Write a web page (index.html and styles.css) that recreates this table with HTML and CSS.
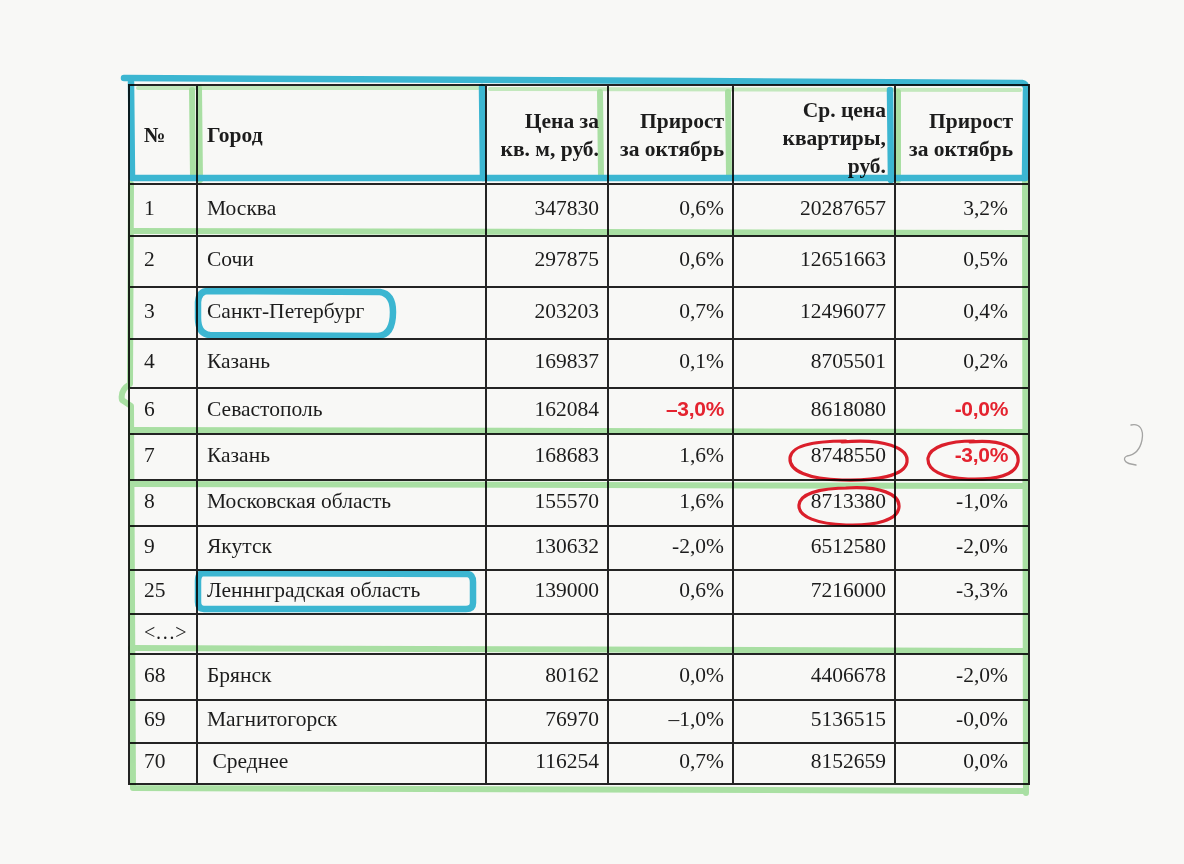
FILE: index.html
```html
<!DOCTYPE html>
<html lang="ru">
<head>
<meta charset="utf-8">
<title>Цены на жильё</title>
<link rel="stylesheet" href="styles.css">
</head>
<body>
<main class="sheet">
  <table class="price-table">
    <colgroup>
      <col class="c-num"><col class="c-city"><col class="c-price"><col class="c-grow"><col class="c-flat"><col class="c-grow2">
    </colgroup>
    <thead>
      <tr class="head">
        <th class="t-left num">№</th>
        <th class="t-left city">Город</th>
        <th class="t-right">Цена за<br>кв. м, руб.</th>
        <th class="t-right">Прирост<br>за октябрь</th>
        <th class="t-right flat-h">Ср. цена<br>квартиры,<br>руб.</th>
        <th class="t-right last">Прирост<br>за октябрь</th>
      </tr>
    </thead>
    <tbody>
      <tr class="h52"><td class="num">1</td><td class="city">Москва</td><td>347830</td><td>0,6%</td><td>20287657</td><td class="last">3,2%</td></tr>
      <tr class="h51"><td class="num">2</td><td class="city">Сочи</td><td>297875</td><td>0,6%</td><td>12651663</td><td class="last">0,5%</td></tr>
      <tr class="h52"><td class="num">3</td><td class="city">Санкт-Петербург</td><td>203203</td><td>0,7%</td><td>12496077</td><td class="last">0,4%</td></tr>
      <tr class="h49"><td class="num">4</td><td class="city">Казань</td><td>169837</td><td>0,1%</td><td>8705501</td><td class="last">0,2%</td></tr>
      <tr class="h46"><td class="num">6</td><td class="city">Севастополь</td><td>162084</td><td><span class="red">–3,0%</span></td><td>8618080</td><td class="last"><span class="red">-0,0%</span></td></tr>
      <tr class="h46"><td class="num">7</td><td class="city">Казань</td><td>168683</td><td>1,6%</td><td>8748550</td><td class="last"><span class="red">-3,0%</span></td></tr>
      <tr class="h46"><td class="num">8</td><td class="city">Московская область</td><td>155570</td><td>1,6%</td><td>8713380</td><td class="last">-1,0%</td></tr>
      <tr class="h44"><td class="num">9</td><td class="city">Якутск</td><td>130632</td><td>-2,0%</td><td>6512580</td><td class="last">-2,0%</td></tr>
      <tr class="h44"><td class="num">25</td><td class="city">Ленннградская область</td><td>139000</td><td>0,6%</td><td>7216000</td><td class="last">-3,3%</td></tr>
      <tr class="h40"><td class="num gap">&lt;…&gt;</td><td class="city"></td><td></td><td></td><td></td><td class="last"></td></tr>
      <tr class="h46"><td class="num">68</td><td class="city">Брянск</td><td>80162</td><td>0,0%</td><td>4406678</td><td class="last">-2,0%</td></tr>
      <tr class="h43"><td class="num">69</td><td class="city">Магнитогорск</td><td>76970</td><td>–1,0%</td><td>5136515</td><td class="last">-0,0%</td></tr>
      <tr class="h41"><td class="num">70</td><td class="city">&nbsp;Среднее</td><td>116254</td><td>0,7%</td><td>8152659</td><td class="last">0,0%</td></tr>
    </tbody>
  </table>

  <svg class="marks" width="1184" height="864" viewBox="0 0 1184 864" aria-hidden="true">
    <g class="green-faint" fill="none" stroke-linecap="round">
      <path d="M138 88 L478 88"/>
      <path d="M490 89 L1020 90"/>
    </g>
    <g class="green" fill="none" stroke-linecap="round" stroke-linejoin="round">
      <path d="M192 90 L193 177"/>
      <path d="M199 88 L200 180"/>
      <path d="M600 92 L601 176"/>
      <path d="M728 92 L729 176"/>
      <path d="M898 92 L898 180"/>
      <path d="M131 184 L130 384 Q120 390 122 400 L131 406 L133 788 L1026 791"/>
      <path d="M1025 180 L1026 793"/>
      <path d="M131 231 L1025 233"/>
      <path d="M131 430 L1025 432"/>
      <path d="M131 484 L1025 486"/>
      <path d="M131 648 L1025 651"/>
    </g>
    <g class="blue" fill="none" stroke-linecap="round" stroke-linejoin="round">
      <path d="M124 78 L700 81 L1022 83 Q1027 84 1026 90 L1025 178"/>
      <path d="M131 82 L132 178 L1025 178"/>
      <path d="M482 87 L483 178"/>
      <path d="M890 90 L891 180"/>
      <path d="M208 291 L380 292 Q393 294 393 312 Q393 335 378 336 L210 335 Q198 334 198 318 L198 302 Q199 291 208 291 Z"/>
      <path d="M204 573 L468 574 Q473 575 473 582 L473 603 Q473 609 466 609 L204 609 Q198 609 198 602 L198 581 Q198 573 204 573 Z"/>
    </g>
    <g class="red-ink" fill="none" stroke-linecap="round">
      <path d="M842 442 C 884 438 909 448 907 462 C 905 476 876 481 842 480 C 808 479 789 471 790 458 C 791 446 812 441 846 441"/>
      <path d="M970 442 C 1002 439 1020 448 1018 462 C 1016 475 996 480 968 479 C 942 478 927 470 928 458 C 930 447 948 441 974 441"/>
      <path d="M846 488 C 880 486 900 494 899 507 C 898 520 876 526 846 525 C 818 524 798 517 799 505 C 800 494 818 488 850 488"/>
    </g>
    <path class="squiggle" d="M1131 425 C 1140 423 1144 430 1142 440 C 1140 450 1134 455 1127 456 C 1122 458 1125 463 1131 464 L1136 465"/>
  </svg>
</main>
</body>
</html>
```

FILE: styles.css
```css
html, body {
  margin: 0;
  padding: 0;
  background: #f8f8f6;
}

.sheet {
  position: relative;
  width: 1184px;
  height: 864px;
  box-sizing: border-box;
  padding: 84px 0 0 128px;
  font-family: "Liberation Serif", "Times New Roman", serif;
  color: #1c1c1c;
  overflow: hidden;
}

.price-table {
  border-collapse: collapse;
  table-layout: fixed;
  width: 900px;
  font-size: 21.5px;
}

.c-num { width: 68px; }
.c-city { width: 289px; }
.c-price { width: 122px; }
.c-grow { width: 125px; }
.c-flat { width: 162px; }
.c-grow2 { width: 134px; }

.price-table th,
.price-table td {
  border: 2px solid #242424;
  padding: 0 8px 0 8px;
  text-align: right;
  vertical-align: middle;
  white-space: nowrap;
  line-height: 26px;
}

.price-table td { padding-bottom: 5px; }

.price-table th {
  font-weight: bold;
  line-height: 28px;
  font-size: 21.5px;
}

.head { height: 99px; }
.head .flat-h { padding-top: 6px; }

.price-table .t-left { text-align: left; }
.price-table .num { text-align: left; padding-left: 14px; }
.price-table .city { text-align: left; padding-left: 9px; }
.price-table td.last { padding-right: 20px; }
.price-table th.last { padding-right: 15px; }
.price-table .gap { font-size: 20px; }

.h52 { height: 52px; }
.h51 { height: 51px; }
.h49 { height: 49px; }
.h46 { height: 46px; }
.h44 { height: 44px; }
.h43 { height: 43px; }
.h41 { height: 41px; }
.h40 { height: 40px; }

.red {
  font-family: "Liberation Sans", Arial, sans-serif;
  font-weight: bold;
  font-size: 21px;
  color: #e4232f;
  letter-spacing: -0.3px;
}

.marks {
  position: absolute;
  left: 0;
  top: 0;
  pointer-events: none;
  mix-blend-mode: multiply;
}

.green { stroke: #a6e4a0; stroke-width: 6; opacity: 0.9; }
.green-faint { stroke: #c9efc4; stroke-width: 4; }
.blue { stroke: #3dbbd9; stroke-width: 6.5; }
.red-ink { stroke: #e2202c; stroke-width: 3.2; }
.squiggle { fill: none; stroke: #a9a9a9; stroke-width: 1.3; stroke-linecap: round; }
```
